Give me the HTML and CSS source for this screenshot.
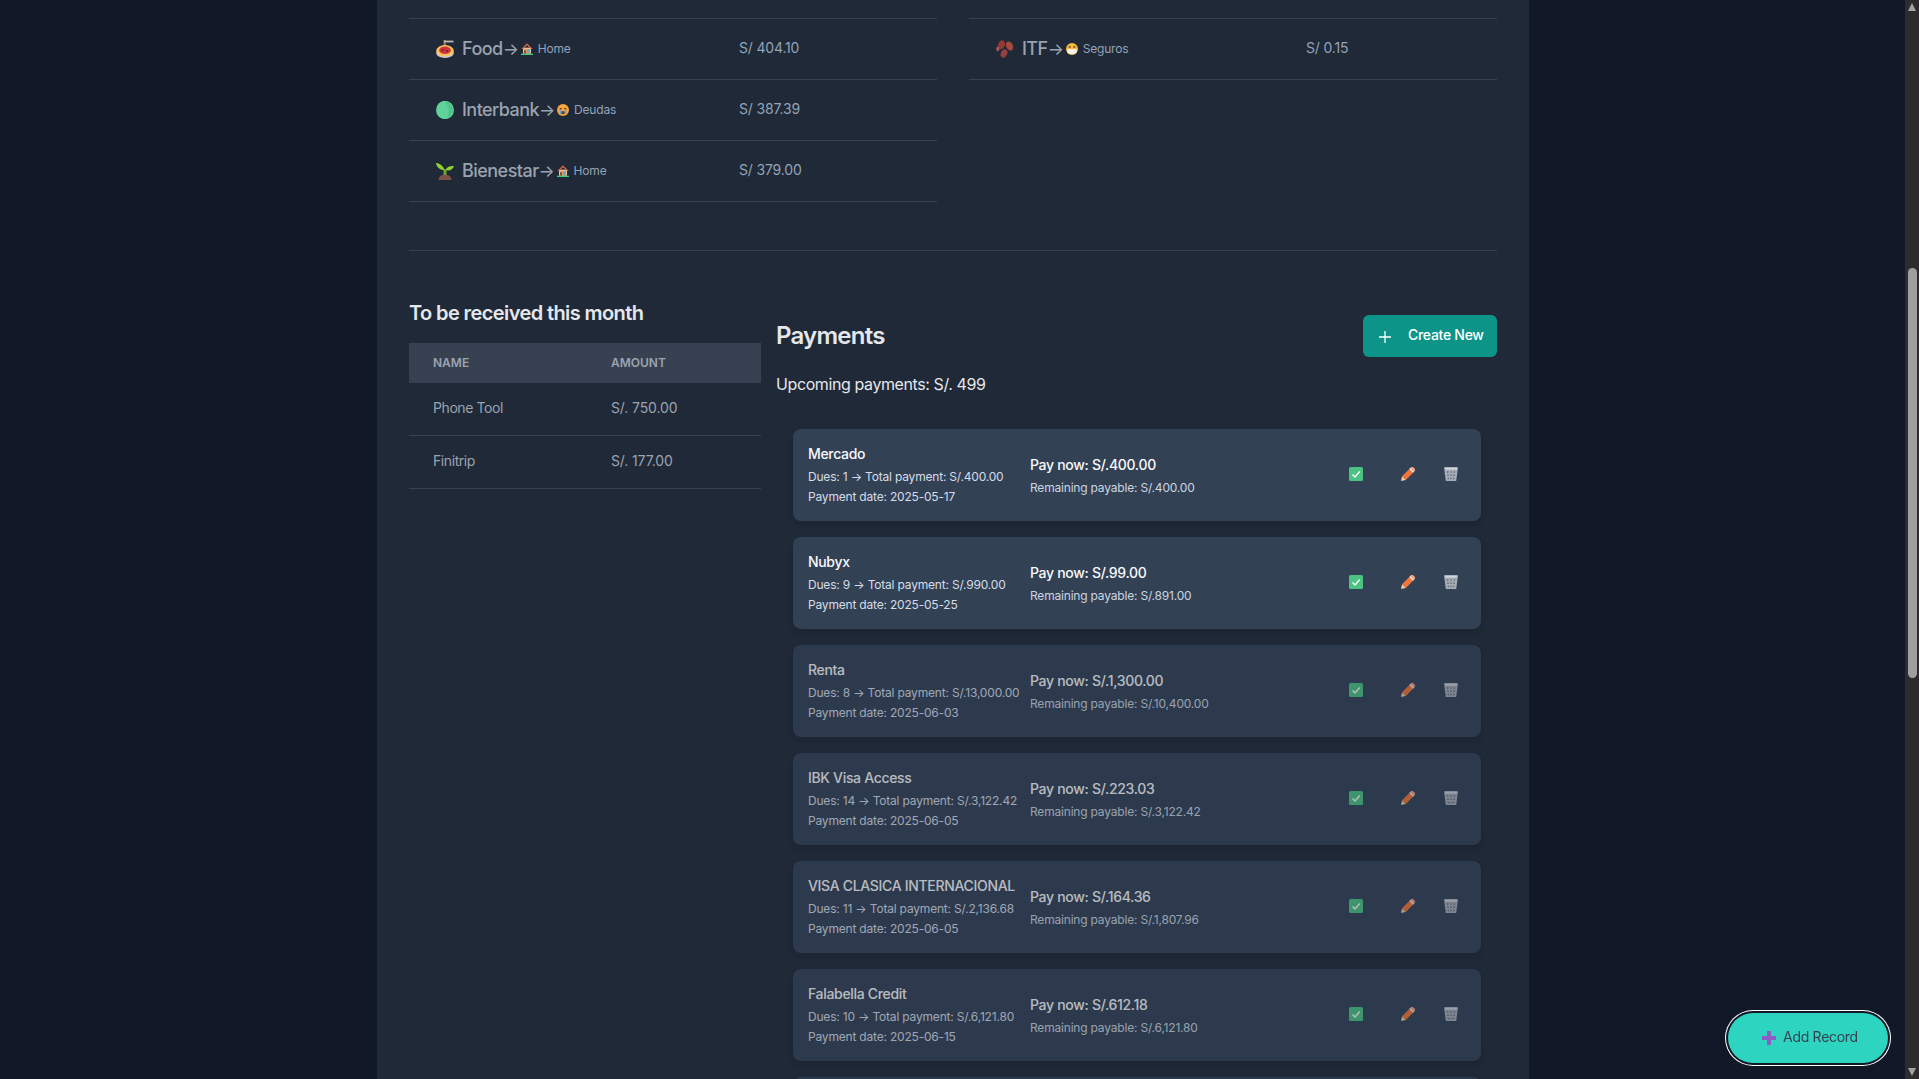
FILE: index.html
```html
<!DOCTYPE html>
<html lang="en">
<head>
<meta charset="utf-8">
<title>Payments</title>
<link rel="stylesheet" href="styles.css">
</head>
<body>
<svg class="defs" width="0" height="0" aria-hidden="true">
  <symbol id="e-pasta" viewBox="0 0 18 18">
    <rect x="7.500" y="0" width="2.400" height="8" fill="#a5704c"/><rect x="8" y="0.600" width="9.500" height="1.800" fill="#bdb8b2"/>
    <ellipse cx="9" cy="13" rx="8.800" ry="5" fill="#cfc6e6"/>
    <ellipse cx="9" cy="10.800" rx="8.800" ry="5.800" fill="#f5c45a"/>
    <ellipse cx="9" cy="10.200" rx="5.800" ry="3.800" fill="#cf3340"/>
    <circle cx="7" cy="10" r="1.100" fill="#7c1f2b"/><circle cx="11" cy="11" r="1.100" fill="#7c1f2b"/>
  </symbol>
  <symbol id="e-circle" viewBox="0 0 18 18">
    <ellipse cx="9" cy="9" rx="9" ry="9.200" fill="#5fd39a"/><path d="M9 .8a8 8 0 0 1 8 8c0 4-2.500 7-6 8 2-3 3-10-2-16Z" fill="#4fc58b"/>
  </symbol>
  <symbol id="e-sprout" viewBox="0 0 18 18">
    <path d="M7.500 15V7.500h3V15Z" fill="#6cab2e"/>
    <path d="M8.800 8C6.800 3.500 3 1 0 1c.6 4 4 7.400 8.800 7Z" fill="#8fd032"/>
    <path d="M9.400 8C11 4.500 14 3.600 18 4c-1 3.600-4.500 5.400-8.600 4Z" fill="#8fd032"/>
    <path d="M2.500 18C3 14 6 12.800 9 12.800s6 1.200 6.500 5.200Z" fill="#7d5244"/>
  </symbol>
  <symbol id="e-house" viewBox="0 0 18 18">
    <rect x="3" y="7" width="12" height="9" fill="#efc29a"/>
    <path d="M9 .5 17.500 9H15L9 3.500 3 9H.5Z" fill="#cf6a42"/>
    <rect x="4.500" y="9" width="9" height="7" fill="#df9a6a"/>
    <rect x="9" y="9.500" width="4.500" height="4.500" fill="#43b4e0"/><rect x="4.500" y="11" width="3" height="5" fill="#8a4f32"/>
    <rect x="0" y="16" width="18" height="2" fill="#45c97f"/>
  </symbol>
  <symbol id="e-cry" viewBox="0 0 18 18">
    <circle cx="9" cy="9" r="9" fill="#f6a63c"/>
    <rect x="4" y="6" width="3" height="2" fill="#5a3320"/><rect x="11" y="6" width="3" height="2" fill="#5a3320"/>
    <ellipse cx="9" cy="13" rx="3" ry="2.400" fill="#7a3a22"/>
    <path d="M4 9h2.500v6H4Z" fill="#5aa9e6"/><path d="M11.500 9H14v6h-2.500Z" fill="#5aa9e6"/>
  </symbol>
  <symbol id="e-mask" viewBox="0 0 18 18">
    <circle cx="9" cy="9" r="9" fill="#f6b93b"/>
    <rect x="4" y="5" width="3" height="2" fill="#5a3320"/><rect x="11" y="5" width="3" height="2" fill="#5a3320"/>
    <path d="M2 9h14v4.500c-1.500 2.500-4 3.500-7 3.500s-5.500-1-7-3.500Z" fill="#f4f1ea"/>
  </symbol>
  <symbol id="e-beans" viewBox="0 0 18 18">
    <ellipse cx="5.500" cy="4.800" rx="3.400" ry="4.600" transform="rotate(22 5.500 4.800)" fill="#8e3a38"/>
    <ellipse cx="13.500" cy="6" rx="3.400" ry="4.800" transform="rotate(-28 13.500 6)" fill="#a34a3c"/>
    <ellipse cx="8" cy="13.500" rx="3.200" ry="4.400" transform="rotate(24 8 13.500)" fill="#93403f"/>
    <ellipse cx="1.800" cy="9" rx="1.600" ry="2.200" fill="#a85a55"/>
  </symbol>
  <symbol id="i-check" viewBox="0 0 14 14">
    <rect width="14" height="14" rx="1.500" fill="#4cc283"/>
    <path d="M3.500 7.500 6 10l4.800-5.500" fill="none" stroke="#f4fff8" stroke-width="1.500"/>
  </symbol>
  <symbol id="i-pencil" viewBox="0 0 14 14">
    <path d="M10.300 0 14 3.700 4.800 12.900 1.100 9.200Z" fill="#f4753a"/>
    <path d="M10.300 0 12 0 14 2 14 3.700 13.200 4.500 9.500 .8Z" fill="#f0a58a"/>
    <path d="M9.300 1 13 4.700 12 5.700 8.300 2Z" fill="#ececec"/>
    <path d="M1.100 9.200 4.800 12.900 0 14Z" fill="#f1cfa3"/>
  </symbol>
  <symbol id="i-trash" viewBox="0 0 14 14">
    <path d="M.3 0h13.400v2.400l-1.500 11.600H1.800L.3 2.400Z" fill="#a6acb6"/>
    <rect x=".8" y=".8" width="12.400" height="1.800" fill="#d2d5da"/>
    <path d="M3.600 4.200v1.600M7 4.200v1.600M10.400 4.200v1.600M4 7.500v1.600M7 7.500v1.600M10 7.500v1.600M4.400 10.800v1.400M7 10.800v1.400M9.600 10.800v1.400" stroke="#636b78" stroke-width="1.300"/>
  </symbol>
</svg>

<div class="window">
  <main class="panel">
    <section class="split-tables">
      <div class="rank-table">
        <div class="rank-row">
          <div class="rank-name"><svg class="emoji"><use href="#e-pasta"/></svg><span class="cat">Food</span><span class="arrow">→</span><svg class="emoji-sm"><use href="#e-house"/></svg><span class="group">Home</span></div>
          <div class="rank-value">S/ 404.10</div>
        </div>
        <div class="rank-row">
          <div class="rank-name"><svg class="emoji"><use href="#e-circle"/></svg><span class="cat">Interbank</span><span class="arrow">→</span><svg class="emoji-sm"><use href="#e-cry"/></svg><span class="group">Deudas</span></div>
          <div class="rank-value">S/ 387.39</div>
        </div>
        <div class="rank-row">
          <div class="rank-name"><svg class="emoji"><use href="#e-sprout"/></svg><span class="cat">Bienestar</span><span class="arrow">→</span><svg class="emoji-sm"><use href="#e-house"/></svg><span class="group">Home</span></div>
          <div class="rank-value">S/ 379.00</div>
        </div>
      </div>
      <div class="rank-table rank-table-right">
        <div class="rank-row">
          <div class="rank-name"><svg class="emoji"><use href="#e-beans"/></svg><span class="cat">ITF</span><span class="arrow">→</span><svg class="emoji-sm"><use href="#e-mask"/></svg><span class="group">Seguros</span></div>
          <div class="rank-value">S/ 0.15</div>
        </div>
      </div>
    </section>

    <hr class="divider">

    <section class="lower">
      <div class="receive">
        <h3 class="receive-title">To be received this month</h3>
        <div class="receive-head"><span>NAME</span><span>AMOUNT</span></div>
        <div class="receive-row"><span class="receive-name">Phone Tool</span><span>S/. 750.00</span></div>
        <div class="receive-row"><span class="receive-name">Finitrip</span><span>S/. 177.00</span></div>
      </div>

      <div class="payments">
        <div class="payments-head">
          <h2 class="payments-title">Payments</h2>
          <button class="create-btn"><svg class="plus" viewBox="0 0 14 14"><path d="M7 1v12M1 7h12" stroke="#fff" stroke-width="1.300"/></svg>Create New</button>
        </div>
        <p class="upcoming">Upcoming payments: S/. 499</p>

        <div class="cards">
          <article class="card">
            <div class="card-info"><div class="card-name">Mercado</div><div class="card-line">Dues: 1 → Total payment: S/.400.00</div><div class="card-line">Payment date: 2025-05-17</div></div>
            <div class="card-pay"><div class="pay-now">Pay now: S/.400.00</div><div class="pay-rest">Remaining payable: S/.400.00</div></div>
            <div class="card-actions"><svg class="act act-check"><use href="#i-check"/></svg><svg class="act act-edit"><use href="#i-pencil"/></svg><svg class="act"><use href="#i-trash"/></svg></div>
          </article>
          <article class="card">
            <div class="card-info"><div class="card-name">Nubyx</div><div class="card-line">Dues: 9 → Total payment: S/.990.00</div><div class="card-line">Payment date: 2025-05-25</div></div>
            <div class="card-pay"><div class="pay-now">Pay now: S/.99.00</div><div class="pay-rest">Remaining payable: S/.891.00</div></div>
            <div class="card-actions"><svg class="act act-check"><use href="#i-check"/></svg><svg class="act act-edit"><use href="#i-pencil"/></svg><svg class="act"><use href="#i-trash"/></svg></div>
          </article>
          <article class="card card-later">
            <div class="card-info"><div class="card-name">Renta</div><div class="card-line">Dues: 8 → Total payment: S/.13,000.00</div><div class="card-line">Payment date: 2025-06-03</div></div>
            <div class="card-pay"><div class="pay-now">Pay now: S/.1,300.00</div><div class="pay-rest">Remaining payable: S/.10,400.00</div></div>
            <div class="card-actions"><svg class="act act-check"><use href="#i-check"/></svg><svg class="act act-edit"><use href="#i-pencil"/></svg><svg class="act"><use href="#i-trash"/></svg></div>
          </article>
          <article class="card card-later">
            <div class="card-info"><div class="card-name">IBK Visa Access</div><div class="card-line">Dues: 14 → Total payment: S/.3,122.42</div><div class="card-line">Payment date: 2025-06-05</div></div>
            <div class="card-pay"><div class="pay-now">Pay now: S/.223.03</div><div class="pay-rest">Remaining payable: S/.3,122.42</div></div>
            <div class="card-actions"><svg class="act act-check"><use href="#i-check"/></svg><svg class="act act-edit"><use href="#i-pencil"/></svg><svg class="act"><use href="#i-trash"/></svg></div>
          </article>
          <article class="card card-later">
            <div class="card-info"><div class="card-name">VISA CLASICA INTERNACIONAL</div><div class="card-line">Dues: 11 → Total payment: S/.2,136.68</div><div class="card-line">Payment date: 2025-06-05</div></div>
            <div class="card-pay"><div class="pay-now">Pay now: S/.164.36</div><div class="pay-rest">Remaining payable: S/.1,807.96</div></div>
            <div class="card-actions"><svg class="act act-check"><use href="#i-check"/></svg><svg class="act act-edit"><use href="#i-pencil"/></svg><svg class="act"><use href="#i-trash"/></svg></div>
          </article>
          <article class="card card-later">
            <div class="card-info"><div class="card-name">Falabella Credit</div><div class="card-line">Dues: 10 → Total payment: S/.6,121.80</div><div class="card-line">Payment date: 2025-06-15</div></div>
            <div class="card-pay"><div class="pay-now">Pay now: S/.612.18</div><div class="pay-rest">Remaining payable: S/.6,121.80</div></div>
            <div class="card-actions"><svg class="act act-check"><use href="#i-check"/></svg><svg class="act act-edit"><use href="#i-pencil"/></svg><svg class="act"><use href="#i-trash"/></svg></div>
          </article>
          <article class="card card-later card-empty"></article>
        </div>
      </div>
    </section>
  </main>

  <div class="scrollbar">
    <span class="sb-arrow sb-up"></span>
    <span class="sb-thumb"></span>
    <span class="sb-arrow sb-down"></span>
  </div>
</div>

<button class="add-record"><svg class="add-plus" viewBox="0 0 14 14"><path d="M5 0h4v5h5v4H9v5H5V9H0V5h5Z" fill="#8e5cc4"/></svg>Add Record</button>
</body>
</html>
```

FILE: styles.css
```css
* { box-sizing: border-box; }
html, body { margin: 0; height: 100%; overflow: hidden; }
body {
  background: #111827;
  color: #9ca3af;
  font-family: Inter, "Noto Sans", sans-serif;
  letter-spacing: -0.02em;
}
.defs { position: absolute; }

.window { display: flex; height: 1079px; }
.panel {
  flex: none;
  width: 1152px;
  margin-left: 377px;
  margin-right: 376px;
  height: 1079px;
  overflow: hidden;
  padding: 18px 32px 0;
  background: #1f2937;
}

/* top tables */
.split-tables { display: grid; grid-template-columns: 528px 528px; gap: 32px; }
.rank-table { border-top: 1px solid #374151; align-self: start; }
.rank-row {
  display: grid;
  grid-template-columns: 330px 1fr;
  align-items: center;
  height: 61px;
  border-bottom: 1px solid #374151;
}
.rank-table-right .rank-row { grid-template-columns: 337px 1fr; }
.rank-name { display: flex; align-items: center; padding-left: 27px; margin-bottom: 1px; }
.emoji { width: 18px; height: 18px; margin-right: 8px; flex: none; }
.emoji-sm { width: 12px; height: 12px; margin-right: 5px; flex: none; }
.cat { font-size: 18px; line-height: 28px; font-weight: 500; color: #9ca3af; letter-spacing: -0.03em; }
.arrow { font-size: 17px; line-height: 20px; width: 18px; margin-right: 0; color: #9ca3af; }
.group { font-size: 12px; line-height: 16px; color: #94a3b8; letter-spacing: -0.015em; }
.rank-value { font-size: 14px; line-height: 20px; color: #94a3b8; letter-spacing: -0.012em; margin-bottom: 2px; }

.divider { margin: 48px 0; border: 0; border-top: 1px solid #374151; height: 0; }

/* lower */
.lower { display: grid; grid-template-columns: 352px 721px; gap: 15px; }
.receive-title { margin: 0 0 16px; font-size: 20px; line-height: 28px; font-weight: 600; color: #e5e7eb; letter-spacing: -0.03em; }
.receive-head, .receive-row {
  display: grid;
  grid-template-columns: 178px 1fr;
  padding-left: 24px;
  align-items: center;
}
.receive-head {
  height: 40px;
  padding-bottom: 2px;
  background: #374151;
  font-size: 12px;
  font-weight: 600;
  letter-spacing: 0;
  color: #9ca3af;
}
.receive-row {
  height: 53px;
  padding-bottom: 3px;
  border-bottom: 1px solid #374151;
  font-size: 14px;
  color: #9ca3af;
  letter-spacing: -0.008em;
}
.receive-name { letter-spacing: -0.03em; }

.payments { padding-top: 16px; }
.payments-head { display: flex; justify-content: space-between; align-items: center; height: 42px; }
.payments-title { margin: 0; font-size: 24px; line-height: 32px; font-weight: 600; color: #e5e7eb; letter-spacing: -0.032em; }
.create-btn {
  display: flex;
  align-items: center;
  width: 134px;
  height: 42px;
  padding: 0 0 2px 15px;
  border: 0;
  border-radius: 6px;
  background: #0d9488;
  color: #fff;
  font: 500 14px/20px Inter, sans-serif;
  letter-spacing: -0.02em;
}
.plus { width: 14px; height: 14px; margin: 4px 16px 0 0; }
.upcoming { margin: 15px 0 33px; font-size: 16px; line-height: 24px; color: #e5e7eb; letter-spacing: -0.025em; }

.cards { display: flex; flex-direction: column; gap: 16px; padding: 0 16px 0 17px; }
.card {
  display: grid;
  grid-template-columns: 221px 1fr auto;
  align-items: center;
  height: 92px;
  padding: 16px 23px 14px 16px;
  border-radius: 8px;
  background: #334155;
  box-shadow: 0 4px 6px rgba(0, 0, 0, .1);
  color: #cbd5e1;
  flex: none;
}
.card-later { opacity: .7; }
.card-name { font-size: 14px; line-height: 20px; font-weight: 500; color: #f8fafc; margin: -1px 0 3px -1px; }
.card-line { font-size: 12px; line-height: 20px; color: #d5dde8; white-space: nowrap; letter-spacing: -0.016em; margin-left: -1px; }
.pay-now { font-size: 14px; line-height: 20px; font-weight: 500; color: #f8fafc; margin-bottom: 3px; letter-spacing: -0.022em; }
.pay-rest { font-size: 12px; line-height: 20px; color: #cbd5e1; letter-spacing: -0.016em; }
.card-actions { display: flex; align-items: center; margin-top: -5px; }
.act { width: 14px; height: 14px; display: block; }
.act-check { margin-right: 38px; }
.act-edit { margin-right: 29px; }

/* scrollbar */
.scrollbar {
  position: relative;
  flex: none;
  width: 14px;
  height: 1079px;
  background: #2c2c2c;
}
.sb-thumb {
  position: absolute;
  left: 3px;
  top: 268px;
  width: 9px;
  height: 410px;
  border-radius: 5px;
  background: #9f9f9f;
}
.sb-arrow { position: absolute; left: 3px; width: 0; height: 0; border-left: 4.500px solid transparent; border-right: 4.500px solid transparent; }
.sb-up { top: 3px; border-bottom: 8px solid #a3a3a3; }
.sb-down { bottom: 3px; border-top: 8px solid #a3a3a3; }

/* floating */
.add-record {
  position: fixed;
  left: 1728px;
  top: 1013px;
  width: 160px;
  height: 50px;
  display: flex;
  align-items: center;
  padding: 0 0 2px 34px;
  border: 0;
  border-radius: 25px;
  background: #2dd4bf;
  box-shadow: 0 0 0 2px #111827, 0 0 0 3px #fff;
  color: #374151;
  font: 400 14px/20px Inter, sans-serif;
  letter-spacing: -0.02em;
}
.add-plus { width: 14px; height: 14px; margin-right: 7px; margin-top: 2px; }
```
